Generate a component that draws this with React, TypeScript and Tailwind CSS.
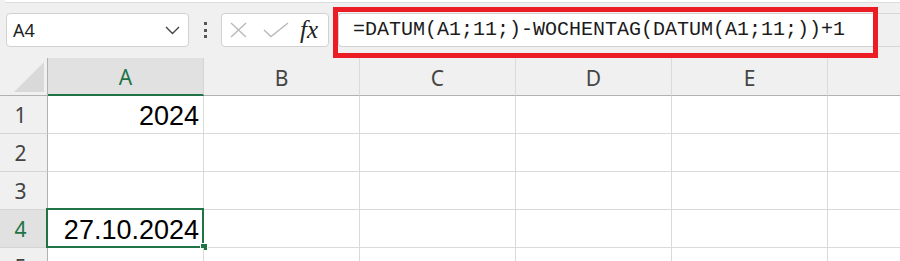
import React from 'react';

const GREEN = '#217346';
const COLS = ['A', 'B', 'C', 'D', 'E'];

// cell content per row, only column A holds values
const ROWS: { n: number; a: string }[] = [
  { n: 1, a: '2024' },
  { n: 2, a: '' },
  { n: 3, a: '' },
  { n: 4, a: '27.10.2024' },
  { n: 5, a: '' },
];

const uiFont = { fontFamily: '"Noto Sans", "Open Sans", sans-serif' };
const cellFont = { fontFamily: '"Liberation Sans", Arial, sans-serif' };

const FormulaBar: React.FC = () => (
  <div className="h-[58px] flex flex-col">
    <div className="h-[3px] ml-[4px] bg-white border-b border-[#dcdcdc] rounded-bl-[4px]" />
    <div className="mt-[10px] h-[34px] flex items-stretch pl-[6px]">
      {/* name box */}
      <div className="w-[183px] bg-white border border-[#d1d1d1] rounded-[4px] flex items-center justify-between pl-[6px] pr-[8px]">
        <span className="text-[18px] text-[#1f1f1f] leading-none" style={uiFont}>A4</span>
        <svg width="15" height="9" viewBox="0 0 15 9" fill="none">
          <polyline points="1,1 7.5,7.5 14,1" stroke="#444" strokeWidth="1.4" />
        </svg>
      </div>
      {/* splitter dots */}
      <div className="w-[32px] flex flex-col items-center justify-center gap-[3.5px]">
        <div className="w-[3px] h-[3px] bg-[#555]" />
        <div className="w-[3px] h-[3px] bg-[#555]" />
        <div className="w-[3px] h-[3px] bg-[#555]" />
      </div>
      {/* cancel / enter / fx */}
      <div className="w-[108px] bg-white border border-[#d1d1d1] rounded-[4px] flex items-center pl-[7px]">
        <svg width="20" height="16" viewBox="0 0 20 16" fill="none">
          <path d="M2 1 L17 15 M17 1 L2 15" stroke="#b9b9b9" strokeWidth="1.4" />
        </svg>
        <svg width="26" height="16" viewBox="0 0 26 16" fill="none" className="ml-[14px]">
          <polyline points="1,8 8,14.5 25,1" stroke="#b9b9b9" strokeWidth="1.4" />
        </svg>
        <span
          className="ml-[11px] text-[25px] italic text-[#222] leading-none -mt-[2px]"
          style={{ fontFamily: '"Liberation Serif", "Times New Roman", serif' }}
        >
          fx
        </span>
      </div>
      {/* formula input */}
      <div className="ml-[9px] w-[535px] bg-white border-y border-l border-[#d1d1d1] rounded-l-[4px] flex items-center pl-[14px]">
        <span
          className="text-[20px] text-[#1b1b1b] leading-none whitespace-nowrap"
          style={{ fontFamily: '"Liberation Mono", "DejaVu Sans Mono", monospace' }}
        >
          =DATUM(A1;11;)-WOCHENTAG(DATUM(A1;11;))+1
        </span>
      </div>
      <div className="flex-1 border-y border-[#d6d6d6]" />
    </div>
  </div>
);

const HeaderRow: React.FC = () => (
  <div className="h-[38px] flex">
    <div className="w-[48px] h-full bg-[#f0f0f0] border-r border-b border-[#b1b1b1] flex items-end justify-end pr-[3px] pb-[3px]">
      <svg width="30" height="30" viewBox="0 0 30 30">
        <polygon points="30,0 30,30 0,30" fill="#d9d9d9" />
      </svg>
    </div>
    {COLS.map((c) => {
      const active = c === 'A';
      return (
        <div
          key={c}
          className={
            active
              ? 'w-[156px] h-full bg-[#e1e1e1] border-r border-r-[#d4d4d4] border-b-2 border-b-[#217346] flex items-center justify-center pt-[4px]'
              : 'w-[156px] h-full bg-[#f0f0f0] border-r border-r-[#dadada] border-b border-b-[#b1b1b1] flex items-center justify-center pt-[4px]'
          }
        >
          <span
            className={active ? 'text-[21px] text-[#217346]' : 'text-[21px] text-[#444]'}
            style={uiFont}
          >
            {c}
          </span>
        </div>
      );
    })}
    <div className="flex-1 h-full bg-[#f0f0f0] border-b border-[#b1b1b1]" />
  </div>
);

export default function App() {
  return (
    <div className="relative w-[900px] h-[261px] overflow-hidden bg-[#f0f0f0]">
      <FormulaBar />
      <HeaderRow />
      {ROWS.map((r) => {
        const sel = r.n === 4;
        return (
          <div key={r.n} className="h-[38px] flex">
            <div
              className={
                sel
                  ? 'w-[48px] h-full bg-[#e1e1e1] border-r border-r-[#b1b1b1] border-b border-b-[#d4d4d4] flex items-center justify-center pr-[6px] pt-[3px]'
                  : 'w-[48px] h-full bg-[#f0f0f0] border-r border-r-[#b1b1b1] border-b border-b-[#d4d4d4] flex items-center justify-center pr-[6px] pt-[3px]'
              }
            >
              <span
                className={sel ? 'text-[21px] text-[#217346]' : 'text-[21px] text-[#444]'}
                style={uiFont}
              >
                {r.n}
              </span>
            </div>
            <div className="relative w-[156px] h-full bg-white border-r border-b border-[#dadada] flex items-center justify-end pr-[4px] pt-[3px]">
              <span className="text-[27px] text-black leading-none" style={cellFont}>
                {r.a}
              </span>
              {sel && (
                <>
                  <div className="absolute -left-[2px] -top-[2px] w-[158px] h-[40px] border-2 border-[#217346]" />
                  <div
                    className="absolute left-[152px] top-[33px] w-[8px] h-[8px] border border-white"
                    style={{ backgroundColor: GREEN }}
                  />
                </>
              )}
            </div>
            {COLS.slice(1).map((c) => (
              <div key={c} className="w-[156px] h-full bg-white border-r border-b border-[#dadada]" />
            ))}
            <div className="flex-1 h-full bg-white border-b border-[#dadada]" />
          </div>
        );
      })}
      {/* red annotation frame around the formula */}
      <div className="absolute left-[333px] top-[7px] w-[545px] h-[51px] border-[5px] border-[#ec1c24]" />
    </div>
  );
}
